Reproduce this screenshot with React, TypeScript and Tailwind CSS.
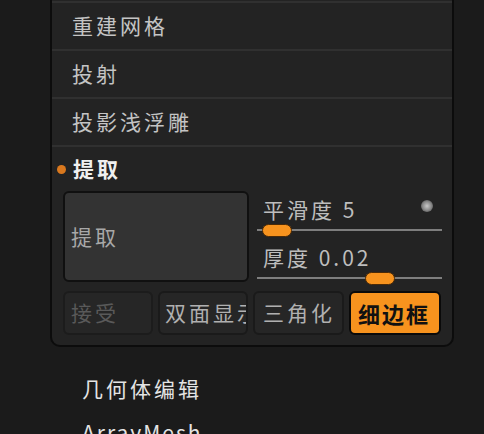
import React from "react";

const font = { fontFamily: '"Noto Sans CJK SC", "Noto Sans", sans-serif' };

function Row({ label }: { label: string }) {
  return (
    <>
      <div className="h-[46px] flex items-center pl-[20px] text-[21px] tracking-[3px] text-[#c4c4c4]">
        {label}
      </div>
      <div className="h-[2px] bg-[#303030]" />
    </>
  );
}

function Slider({ label, pos }: { label: string; pos: number }) {
  return (
    <div className="flex flex-col">
      <div className="h-[24px] flex items-center pl-[6px] text-[21px] tracking-[3px] text-[#bdbdbd]">
        {label}
      </div>
      <div className="relative h-[16px]">
        <div className="absolute left-0 right-0 top-[7px] h-[2px] bg-[#7e7e7e]" />
        <div
          className="absolute top-[2px] w-[30px] h-[13px] rounded-full bg-[#f7931e] border border-[#4a2a08]"
          style={{ left: pos }}
        />
      </div>
    </div>
  );
}

export default function App() {
  return (
    <div className="w-[484px] h-[434px] bg-[#1b1b1b] overflow-hidden" style={font}>
      <div className="ml-[50px] w-[404px] bg-[#232323] border-2 border-t-0 border-[#0c0c0c] rounded-b-[10px]">
        <div className="h-[1px] bg-[#232323]" />
        <div className="h-[2px] bg-[#303030]" />
        <Row label="重建网格" />
        <Row label="投射" />
        <Row label="投影浅浮雕" />

        <div className="h-[44px] flex items-center">
          <div className="ml-[5px] w-[9px] h-[9px] rounded-full bg-[#d9781e]" />
          <span className="ml-[7px] text-[21px] font-bold tracking-[3px] text-[#f0f0f0]">提取</span>
        </div>

        <div className="flex pl-[11px] pr-[10px]">
          <div className="w-[186px] h-[91px] bg-[#333333] border-2 border-[#101010] rounded-[6px] flex items-center pl-[6px] text-[21px] tracking-[3px] text-[#a8a8a8]">
            提取
          </div>
          <div className="flex-1 ml-[8px] pt-[7px] relative flex flex-col gap-[8px]">
            <div className="absolute right-[9px] top-[9px] w-[12px] h-[12px] rounded-full bg-[radial-gradient(circle,#c8c8c8_0%,#8a8a8a_50%,#3a3a3a_100%)]" />
            <Slider label="平滑度 5" pos={5} />
            <Slider label="厚度 0.02" pos={108} />
          </div>
        </div>

        <div className="flex gap-[5px] pl-[11px] pr-[10px] mt-[5px] pb-[10px]">
          <div className="w-[90px] h-[44px] rounded-[6px] bg-[#262626] border-2 border-[#1c1c1c] flex items-center pl-[6px] text-[21px] tracking-[3px] text-[#595959]">
            接受
          </div>
          <div className="w-[90px] h-[44px] rounded-[6px] bg-[#262626] border-2 border-[#1a1a1a] flex items-center pl-[5px] text-[21px] tracking-[3px] text-[#b0b0b0] overflow-hidden whitespace-nowrap">
            双面显示
          </div>
          <div className="w-[91px] h-[44px] rounded-[6px] bg-[#262626] border-2 border-[#1a1a1a] flex items-center pl-[8px] text-[21px] tracking-[3px] text-[#b0b0b0]">
            三角化
          </div>
          <div className="w-[92px] h-[44px] rounded-[6px] bg-[#f7931e] border-2 border-[#0a0a0a] flex items-center pl-[7px] text-[22px] font-bold tracking-[2px] text-[#111]">
            细边框
          </div>
        </div>
      </div>

      <div className="ml-[82px] mt-[26px] text-[21px] tracking-[3px] text-[#e4e4e4]">几何体编辑</div>
      <div className="ml-[82px] mt-[12px] text-[21px] tracking-[2px] text-[#e4e4e4]">ArrayMesh</div>
    </div>
  );
}
